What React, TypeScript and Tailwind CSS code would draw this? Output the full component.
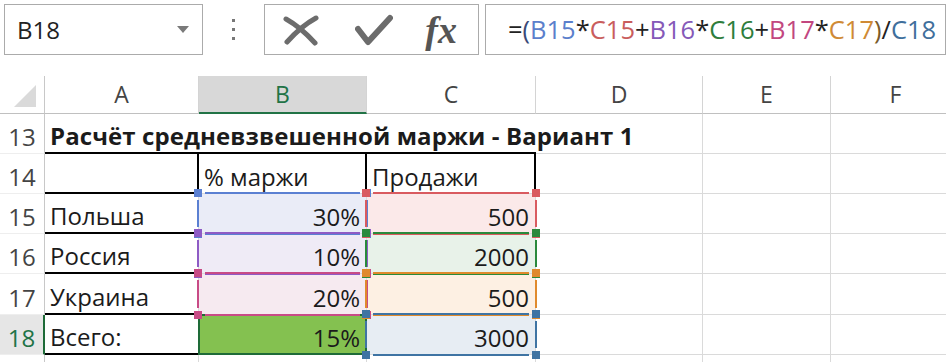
import { ReactNode } from "react";

// column widths (A..F)
const A = "w-[154px]";
const B = "w-[168px]";
const C = "w-[169px]";
const D = "w-[167px]";
const E = "w-[128px]";
const F = "w-[130px]";

const GRID = "border-r border-b border-[#dadada]";

interface CellProps {
  w: string;
  cls?: string;
  right?: boolean;
  children?: ReactNode;
}

const Cell = ({ w, cls = GRID, right = false, children }: CellProps) => (
  <div
    className={`relative flex shrink-0 items-end pb-[4px] leading-[24px] ${
      right ? "justify-end pr-[6px]" : "pl-[5px]"
    } ${w} ${cls}`}
  >
    {children}
  </div>
);

// coloured reference frame (lines + corner handles)
const Frame = ({ line }: { line: string }) => (
  <div className="pointer-events-none absolute -top-px -right-px -bottom-px -left-px z-10">
    <div className={`absolute left-[7px] right-[7px] -top-px h-[2px] ${line}`} />
    <div className={`absolute left-[7px] right-[7px] -bottom-px h-[2px] ${line}`} />
    <div className={`absolute top-[7px] bottom-[7px] -left-px w-[2px] ${line}`} />
    <div className={`absolute top-[7px] bottom-[7px] -right-px w-[2px] ${line}`} />
    <div className={`absolute -left-[4px] -top-[4px] h-[8px] w-[8px] ${line}`} />
    <div className={`absolute -right-[4px] -top-[4px] h-[8px] w-[8px] ${line}`} />
    <div className={`absolute -left-[4px] -bottom-[4px] h-[8px] w-[8px] ${line}`} />
    <div className={`absolute -right-[4px] -bottom-[4px] h-[8px] w-[8px] ${line}`} />
  </div>
);

const RowHead = ({ n, active = false }: { n?: number; active?: boolean }) => (
  <div
    className={`flex w-[45px] shrink-0 items-end justify-center pb-[4px] text-[24px] leading-[24px] ${
      active
        ? "border-r-2 border-b border-r-[#1e6b38] border-b-[#eeeeee] bg-[#e6e6e6] text-[#217346]"
        : "border-r border-b border-r-[#c8c8c8] border-b-[#eeeeee] text-[#444]"
    }`}
  >
    {n}
  </div>
);

const TopBar = () => (
  <div className="flex h-[55px] pl-[4px] pt-[4px]">
    <div className="flex w-[203px] items-center justify-between border border-[#ababab] pl-[12px] pr-[13px]">
      <span className="text-[24px] text-[#222]">B18</span>
      <svg width="12" height="7" viewBox="0 0 12 7">
        <path d="M0 0h12L6 7z" fill="#7a7a7a" />
      </svg>
    </div>
    <div className="flex w-[62px] flex-col items-center justify-center gap-[6px]">
      <div className="h-[3px] w-[3px] bg-[#777]" />
      <div className="h-[3px] w-[3px] bg-[#777]" />
      <div className="h-[3px] w-[3px] bg-[#777]" />
    </div>
    <div className="flex w-[219px] items-center border border-[#ababab]">
      <svg className="ml-[18px]" width="36" height="32" viewBox="0 0 36 32">
        <path d="M3 5 C12 10 22 18 32 29" stroke="#6c6c6c" strokeWidth="5" strokeLinecap="round" fill="none" />
        <path d="M33 4 C22 10 12 19 4 28" stroke="#6c6c6c" strokeWidth="5" strokeLinecap="round" fill="none" />
      </svg>
      <svg className="ml-[36px]" width="38" height="32" viewBox="0 0 38 32">
        <path d="M3 15 L13 28 L35 4" stroke="#6c6c6c" strokeWidth="6" strokeLinecap="round" strokeLinejoin="round" fill="none" />
      </svg>
      <span className="ml-[32px] font-['Liberation_Serif',serif] text-[38px] font-bold italic leading-none text-[#555]">
        fx
      </span>
    </div>
    <div className="ml-[6px] flex w-[470px] items-center border border-[#ababab] pl-[22px] text-[25.5px] whitespace-nowrap">
      <span className="text-[#222]">=</span>
      <span className="text-[#3a4a78]">(</span>
      <span className="text-[#5b7fcc]">B15</span>
      <span className="text-[#222]">*</span>
      <span className="text-[#c95d5d]">C15</span>
      <span className="text-[#222]">+</span>
      <span className="text-[#8559b8]">B16</span>
      <span className="text-[#222]">*</span>
      <span className="text-[#2e7d3c]">C16</span>
      <span className="text-[#222]">+</span>
      <span className="text-[#c2477f]">B17</span>
      <span className="text-[#222]">*</span>
      <span className="text-[#cf8a35]">C17</span>
      <span className="text-[#7a5a2a]">)</span>
      <span className="text-[#222]">/</span>
      <span className="text-[#3f6f9c]">C18</span>
    </div>
  </div>
);

const HCell = ({ w, label, active = false }: { w: string; label: string; active?: boolean }) => (
  <div
    className={`flex shrink-0 items-center justify-center text-[23px] ${w} ${
      active
        ? "border-r border-b-2 border-r-[#d4d4d4] border-b-[#217346] bg-[#d8d8d8] text-[#217346]"
        : "border-r border-b border-r-[#d4d4d4] border-b-[#c0c0c0] text-[#444]"
    }`}
  >
    {label}
  </div>
);

const BLACK_B = "border-r border-b-2 border-r-[#dadada] border-b-black";
const NO_R_B = "border-b-2 border-b-black";

export default function App() {
  return (
    <div className="h-[362px] w-[946px] overflow-hidden bg-white font-['Open_Sans','Noto_Sans',sans-serif] text-[24px] text-[#1b1b1b]">
      <TopBar />

      <div className="mt-[21px]">
        {/* column headers */}
        <div className="flex h-[38px]">
          <div className="flex w-[45px] shrink-0 items-end justify-end border-r border-b border-r-[#c8c8c8] border-b-[#c0c0c0] pr-[8px] pb-[6px]">
            <svg width="22" height="22" viewBox="0 0 22 22">
              <polygon points="22,0 22,22 0,22" fill="#dadada" />
            </svg>
          </div>
          <HCell w={A} label="A" />
          <HCell w={B} label="B" active />
          <HCell w={C} label="C" />
          <HCell w={D} label="D" />
          <HCell w={E} label="E" />
          <HCell w={F} label="F" />
        </div>

        {/* 13 */}
        <div className="flex h-[40px]">
          <RowHead n={13} />
          <Cell w={A} cls={NO_R_B}>
            <span className="whitespace-nowrap font-bold tracking-[0.1px]">Расчёт средневзвешенной маржи - Вариант 1</span>
          </Cell>
          <Cell w={B} cls={NO_R_B} />
          <Cell w={C} cls={NO_R_B} />
          <Cell w={D} />
          <Cell w={E} />
          <Cell w={F} />
        </div>

        {/* 14 */}
        <div className="flex h-[40px]">
          <RowHead n={14} />
          <Cell w={A} cls="border-r-2 border-b-2 border-black" />
          <Cell w={B} cls="border-r-2 border-b border-r-black border-b-[#dadada]">% маржи</Cell>
          <Cell w={C} cls="border-r-2 border-b border-r-black border-b-[#dadada]">Продажи</Cell>
          <Cell w={D} />
          <Cell w={E} />
          <Cell w={F} />
        </div>

        {/* 15 */}
        <div className="flex h-[40px]">
          <RowHead n={15} />
          <Cell w={A} cls={BLACK_B}>Польша</Cell>
          <Cell w={B} right cls={`${GRID} bg-[#eaecf7]`}>
            30%
            <Frame line="bg-[#5b80d2]" />
          </Cell>
          <Cell w={C} right cls={`${GRID} bg-[#fbe9e9]`}>
            500
            <Frame line="bg-[#d95b60]" />
          </Cell>
          <Cell w={D} />
          <Cell w={E} />
          <Cell w={F} />
        </div>

        {/* 16 */}
        <div className="flex h-[40px]">
          <RowHead n={16} />
          <Cell w={A} cls={BLACK_B}>Россия</Cell>
          <Cell w={B} right cls={`${GRID} bg-[#efebf6]`}>
            10%
            <Frame line="bg-[#8e5bc5]" />
          </Cell>
          <Cell w={C} right cls={`${GRID} bg-[#e8f2e9]`}>
            2000
            <Frame line="bg-[#2a8a3c]" />
          </Cell>
          <Cell w={D} />
          <Cell w={E} />
          <Cell w={F} />
        </div>

        {/* 17 */}
        <div className="flex h-[41px]">
          <RowHead n={17} />
          <Cell w={A} cls={BLACK_B}>Украина</Cell>
          <Cell w={B} right cls={`${GRID} bg-[#f6eaf0]`}>
            20%
            <Frame line="bg-[#c84b86]" />
          </Cell>
          <Cell w={C} right cls={`${GRID} bg-[#fdf0e3]`}>
            500
            <Frame line="bg-[#e08a2c]" />
          </Cell>
          <Cell w={D} />
          <Cell w={E} />
          <Cell w={F} />
        </div>

        {/* 18 */}
        <div className="flex h-[40px]">
          <RowHead n={18} active />
          <Cell w={A} cls={BLACK_B}>Всего:</Cell>
          <Cell w={B} right cls={`${GRID} bg-[#84c150]`}>
            15%
            <div className="pointer-events-none absolute -top-px -right-px -bottom-px -left-px z-[5] border-2 border-[#1e6b38]" />
          </Cell>
          <Cell w={C} right cls={`${GRID} bg-[#e7edf3]`}>
            3000
            <Frame line="bg-[#3f74a3]" />
          </Cell>
          <Cell w={D} />
          <Cell w={E} />
          <Cell w={F} />
        </div>

        {/* 19 (cut off) */}
        <div className="flex h-[40px]">
          <RowHead />
          <Cell w={A} />
          <Cell w={B} />
          <Cell w={C} />
          <Cell w={D} />
          <Cell w={E} />
          <Cell w={F} />
        </div>
      </div>
    </div>
  );
}
